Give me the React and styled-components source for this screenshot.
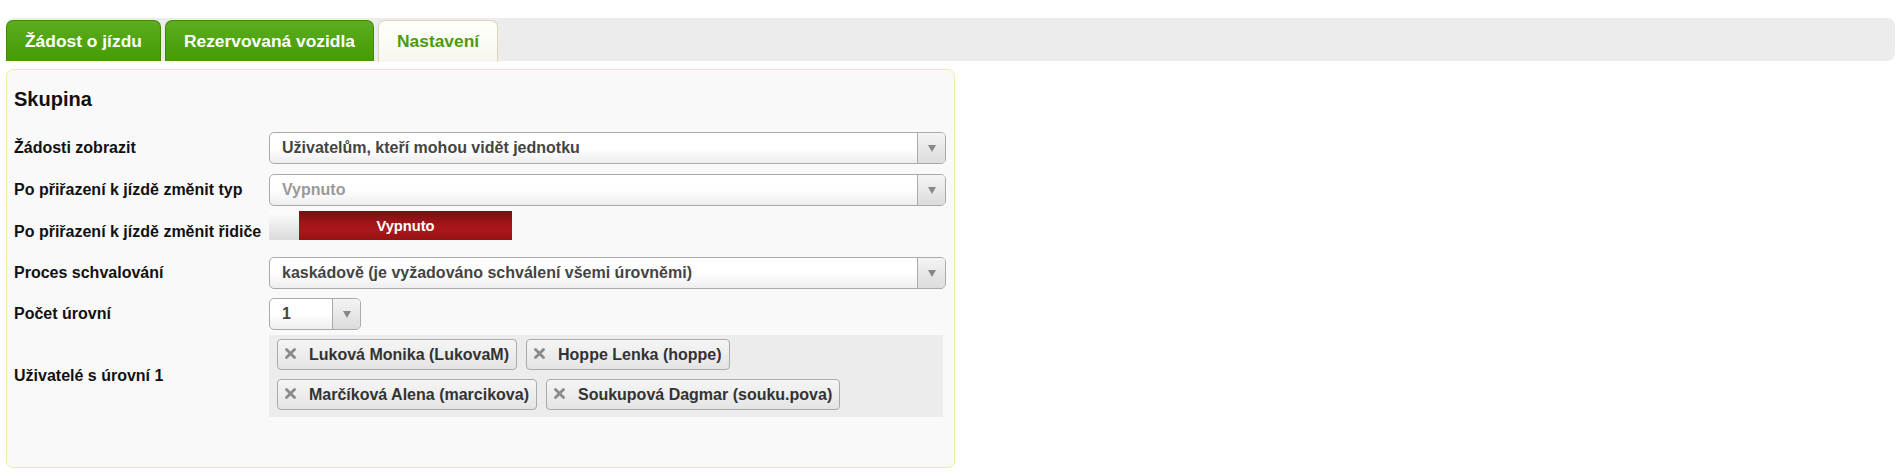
import React from "react";
import styled, { createGlobalStyle } from "styled-components";

const Global = createGlobalStyle`
    body {
        margin: 0;
        background: #fff;
        font-family: "Liberation Sans", Arial, sans-serif;
    }
`;

const Page = styled.div`
    padding: 18px 6px 0 6px;
`;

const TabBar = styled.div`
    display: flex;
    gap: 4px;
    height: 43px;
    padding-top: 2px;
    box-sizing: border-box;
    background: #ececec;
    border-radius: 8px;
`;

const Tab = styled.div`
    height: ${(p) => (p.$active ? "42px" : "41px")};
    box-sizing: border-box;
    padding: 0 18px;
    display: flex;
    align-items: center;
    font-size: 17.4px;
    font-weight: bold;
    border-radius: 7px 7px 0 0;
    border: 1px solid ${(p) => (p.$active ? "#ddd5b4" : "#3f8a05")};
    border-bottom: none;
    color: ${(p) => (p.$active ? "#4a9c0c" : "#fff")};
    background: ${(p) =>
        p.$active
            ? "linear-gradient(#fffffb, #f7f7ef)"
            : "linear-gradient(#5cac20, #449c02)"};
`;

const Panel = styled.div`
    margin-top: 8px;
    width: 949px;
    height: 399px;
    box-sizing: border-box;
    background: #f9f9f9;
    border: 1px solid #f6e7a6;
    border-radius: 7px;
    padding: 18px 8px 0 7px;
`;

const Heading = styled.div`
    font-size: 20px;
    line-height: 23px;
    font-weight: bold;
    color: #111;
    margin-bottom: 21px;
`;

const Row = styled.div`
    display: grid;
    grid-template-columns: 255px 1fr;
    align-items: ${(p) => p.$align || "center"};
    margin-top: ${(p) => p.$top || 0}px;
`;

const Label = styled.div`
    font-size: 16px;
    font-weight: bold;
    color: #111;
    padding-top: ${(p) => p.$shift || 0}px;
`;

const Select = styled.div`
    display: flex;
    height: ${(p) => p.$h || 32}px;
    width: ${(p) => p.$w || "auto"};
    box-sizing: border-box;
    border: 1px solid #aaa;
    border-radius: 5px;
    background: linear-gradient(#fff 0%, #fff 50%, #eee 100%);
    overflow: hidden;
`;

const SelectText = styled.div`
    flex: 1;
    display: flex;
    align-items: center;
    padding-left: 12px;
    font-size: 16px;
    font-weight: bold;
    color: ${(p) => (p.$placeholder ? "#999" : "#444")};
    white-space: nowrap;
`;

const Arrow = styled.div`
    width: 27px;
    border-left: 1px solid #aaa;
    background: linear-gradient(#f4f4f4, #dcdcdc);
    display: flex;
    align-items: center;
    justify-content: center;

    &::after {
        content: "";
        border-left: 4px solid transparent;
        border-right: 4px solid transparent;
        border-top: 7px solid #888;
        margin-top: 1px;
    }
`;

const Toggle = styled.div`
    display: flex;
    width: 243px;
    height: 29px;
`;

const ToggleKnob = styled.div`
    width: 30px;
    background: linear-gradient(#fefefe, #dadada);
`;

const ToggleState = styled.div`
    flex: 1;
    display: flex;
    align-items: center;
    justify-content: center;
    color: #fff;
    font-size: 14.7px;
    font-weight: bold;
    background: linear-gradient(#790d10 0%, #a3161a 45%, #a8171b 70%, #951114 100%);
`;

const TagBox = styled.div`
    width: 674px;
    box-sizing: border-box;
    background: #ececec;
    padding: 4px 8px 7px 8px;
    display: flex;
    flex-direction: column;
    gap: 9px;
`;

const TagLine = styled.div`
    display: flex;
    gap: 9px;
`;

const Tag = styled.div`
    height: 31px;
    box-sizing: border-box;
    display: flex;
    align-items: center;
    gap: 13px;
    padding: 0 7px 0 7px;
    border: 1px solid #aaa;
    border-radius: 4px;
    background: linear-gradient(#f5f5f5 0%, #ededed 50%, #e4e4e4 100%);
    font-size: 16px;
    font-weight: bold;
    color: #333;
    white-space: nowrap;
`;

const RemoveIcon = styled.svg`
    width: 11px;
    height: 11px;
    margin-top: -2px;
    flex: none;
`;

function Remove() {
    return (
        <RemoveIcon viewBox="0 0 11 11">
            <path d="M1.5 1.5 L9.5 9.5 M9.5 1.5 L1.5 9.5" stroke="#8a8a8a" strokeWidth="2.8" strokeLinecap="round" />
        </RemoveIcon>
    );
}

function Dropdown({ value, placeholder, width }) {
    return (
        <Select $w={width}>
            <SelectText $placeholder={placeholder}>{value}</SelectText>
            <Arrow />
        </Select>
    );
}

const users = [
    ["Luková Monika (LukovaM)", "Hoppe Lenka (hoppe)"],
    ["Marčíková Alena (marcikova)", "Soukupová Dagmar (souku.pova)"],
];

export default function App() {
    return (
        <Page>
            <Global />
            <TabBar>
                <Tab>Žádost o jízdu</Tab>
                <Tab>Rezervovaná vozidla</Tab>
                <Tab $active>Nastavení</Tab>
            </TabBar>
            <Panel>
                <Heading>Skupina</Heading>
                <Row>
                    <Label>Žádosti zobrazit</Label>
                    <Dropdown value="Uživatelům, kteří mohou vidět jednotku" />
                </Row>
                <Row $top={10}>
                    <Label>Po přiřazení k jízdě změnit typ</Label>
                    <Dropdown value="Vypnuto" placeholder />
                </Row>
                <Row $top={5} $align="start">
                    <Label $shift={12}>Po přiřazení k jízdě změnit řidiče</Label>
                    <Toggle>
                        <ToggleKnob />
                        <ToggleState>Vypnuto</ToggleState>
                    </Toggle>
                </Row>
                <Row $top={16}>
                    <Label>Proces schvalování</Label>
                    <Dropdown value="kaskádově (je vyžadováno schválení všemi úrovněmi)" />
                </Row>
                <Row $top={9}>
                    <Label>Počet úrovní</Label>
                    <Dropdown value="1" width="92px" />
                </Row>
                <Row $top={5}>
                    <Label>Uživatelé s úrovní 1</Label>
                    <TagBox>
                        {users.map((line, i) => (
                            <TagLine key={i}>
                                {line.map((u) => (
                                    <Tag key={u}>
                                        <Remove />
                                        {u}
                                    </Tag>
                                ))}
                            </TagLine>
                        ))}
                    </TagBox>
                </Row>
            </Panel>
        </Page>
    );
}
